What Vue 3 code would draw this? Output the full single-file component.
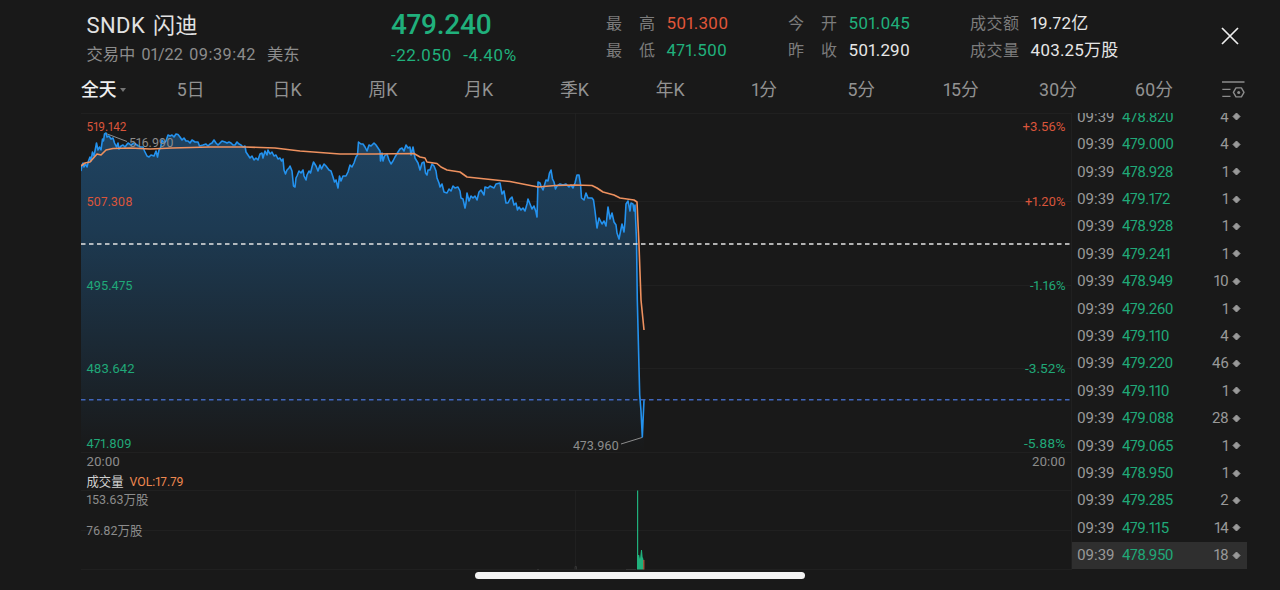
<script setup>
import { computed } from 'vue'

const stats = [
    [
        { label: '最高', value: '501.300', tone: 'up' },
        { label: '最低', value: '471.500', tone: 'down' }
    ],
    [
        { label: '今开', value: '501.045', tone: 'down' },
        { label: '昨收', value: '501.290', tone: 'flat' }
    ],
    [
        { label: '成交额', value: '19.72亿', tone: 'flat' },
        { label: '成交量', value: '403.25万股', tone: 'flat' }
    ]
]

const tabs = ['全天', '5日', '日K', '周K', '月K', '季K', '年K', '1分', '5分', '15分', '30分', '60分']

const trades = [
    ['478.820', 4],
    ['479.000', 4],
    ['478.928', 1],
    ['479.172', 1],
    ['478.928', 1],
    ['479.241', 1],
    ['478.949', 10],
    ['479.260', 1],
    ['479.110', 4],
    ['479.220', 46],
    ['479.110', 1],
    ['479.088', 28],
    ['479.065', 1],
    ['478.950', 1],
    ['479.285', 2],
    ['479.115', 14],
    ['478.950', 18]
]

// x = left edge, y = baseline, w = text width
const labels = [
    { t: '519.142', x: 86.5, y: 130.6, w: 40, c: 'up' },
    { t: '507.308', x: 86.5, y: 206, w: 46, c: 'up' },
    { t: '495.475', x: 86.5, y: 289.6, w: 46, c: 'down' },
    { t: '483.642', x: 86.5, y: 373, w: 48, c: 'down' },
    { t: '471.809', x: 86.5, y: 448, w: 45, c: 'down' },
    { t: '+3.56%', x: 1022.5, y: 130.6, w: 43, c: 'up' },
    { t: '+1.20%', x: 1025, y: 206, w: 40.5, c: 'up' },
    { t: '-1.16%', x: 1030, y: 289.6, w: 35.5, c: 'down' },
    { t: '-3.52%', x: 1025, y: 373, w: 40.5, c: 'down' },
    { t: '-5.88%', x: 1024, y: 448, w: 41.5, c: 'down' },
    { t: '20:00', x: 86.5, y: 466, w: 33.5, c: 'dim' },
    { t: '20:00', x: 1032, y: 466, w: 33.5, c: 'dim' },
    { t: '516.990', x: 129, y: 147.3, w: 44.5, c: 'dim' },
    { t: '473.960', x: 573, y: 449.8, w: 46, c: 'dim' },
    { t: '成交量', x: 86.5, y: 485.6, w: 37, c: 'bright' },
    { t: 'VOL:17.79', x: 129.5, y: 485.6, w: 54, c: 'vol' },
    { t: '153.63万股', x: 86.5, y: 503.6, w: 62, c: 'dim' },
    { t: '76.82万股', x: 86.5, y: 534.6, w: 56, c: 'dim' }
]

const gridY = [113.5, 201.5, 285.5, 368.5, 452.5, 490.5, 530.5, 569.5]

const price = `81,171 82,165 83,163 84,167 85.5,164 87,167 88.5,161 90,157 91,161 92.5,152 94,156 95,151
96.5,143 98,150 99.5,147 101,150 102.5,139 103.5,141 104.5,134 106,133 107,137 109,136 111,139 113,138
114.5,143 116.5,147 118,143 119,149 121,146 123,145 125,147 128,143 131,145 134,143 137,145 140,147
143,147 144.5,151 147,156 149,157 151,155 154,156 156,151 157.5,157 159,150 160.5,148 162,140 164,143
166,141 168,135 170,136 172,135 174,137 176,134 178,134.5 180,137 182,140 184,138 186,141 188,141
190,143 192,140 195,142 198,142 199.5,146 203,145 206,144 208,146 210,144 212,143 214,140 216,143
218,145 220,143 222,141 225,142 227,143 229,142 231,143 233,145 235,145 237,142 239,144 241,145 243,147
245,146 246,152 248,155 250,158 252,156 254,160 256,158 258,160 260,154 262,153 263,158 265,151 267,155
268,150 270,154 272,152 274,156 276,155 278,159 280,158 281.5,161 283,159 284,170 285.5,174 287,170
289,168 290,166 292,171 293.5,186 295,187 296,178 297,176 299,171 301,173 303,170 304,176 306,180
307,175 309,171 310.5,173 312,167 313.5,162 316,166 318,171 320,165 321.5,169 324,164 326,166 329,170
331,171 333,177 334.5,182 336,180 338,188 339.5,176 341,181 343,176 346,176 348,172 350,165 352,167
354,163 356,157 357.5,155 358.5,142 361,144 363,144 365,147 367,151 369,145 371,146 374,143 376,145
378,148 380,151 380.5,161 382,153 383,161 384.5,156 387,154 389,160 391,164 393,161 395,157 398,152
400,149 402,148 404,151 406,145 408,148 410,147 411,155 413,147 415,158 418,163 420,170 422,163 424,162
425.5,173 427,175 428,170 430,170 432,164 434,166 436,171 437,178 439,183 440,187 442,184 444,192
447,193 449,189 451,191 453,186 455,188 458,187 460,191 461,198 463,199 465,208 466,203 467,193 469,201
471,196 473,198 475,196 477,200 479,192 481,190 484,195 485,187 488,188 490,186 494,188 496,184 500,183
502,194 504,191 506,203 508,203 510,199 512,197 514,205 516,203 517.5,210 519,207 521,210 523,208
525,211 527,204 528,199 530,204 532,209 534,206 536,212 537,217 538,182 540,183 541,186 543,190 546,180
548,181 549.5,173 551,170 552.5,179 554,182 555.5,189 557,186 560,184 563,185 566,184 569,187 571,185
573,188 575,183 577,175 579,175 580.5,184 581.5,198 584,200 586,193 588,198 592,198 593.5,200 595,211
597,228 599,218 602,224 604,221 606,226 608,207 610,219 612,213 614,222 616,225 617,233 619,239 621,229
622,224 624,232 625,222 626,204 628,201 630,211 631,203 633,204 634,211 635,205 636.5,240 637.3,300
639.7,395 641,411 642.3,437 644,400`

const average = `81,166 85,163 90,162 97,154 101,155 106,150 113,148.5 130,148 150,149 172,148 210,147
245,147 275,148 300,151 320,152.5 340,154 357,154 375,154 414,153.5 420,157 425,158 427,162 437,163.5
441,167 447,170 460,172 467,177 500,180.5 510,181.5 538,187 555,185.5 575,185 592,185.5 597,188 603,192
614,195 620,198 634,200 637,202 639,245 641,300 644,330`

const area = computed(() => `${price} 644,452 81,452`)
</script>

<template>
  <div class="screen">
    <header class="head">
        <div class="symbol">
            <div class="name"><span>SNDK</span><span>闪迪</span></div>
            <div class="session"><span>交易中</span><span>01/22</span><span class="clock">09:39:42</span><span class="zone">美东</span></div>
        </div>
        <div class="quote down">
            <div class="last">479.240</div>
            <div class="change"><span>-22.050</span><span>-4.40%</span></div>
        </div>
        <div v-for="(group, i) in stats" :key="i" class="stat-group">
            <div v-for="s in group" :key="s.label" class="stat">
                <span class="stat-label"><i v-for="ch in s.label" :key="ch">{{ ch }}</i></span>
                <span :class="s.tone">{{ s.value }}</span>
            </div>
        </div>
        <svg class="close" viewBox="0 0 18 18" width="18" height="18">
            <path d="M1 1L17 17M17 1L1 17" />
        </svg>
    </header>

    <nav class="tabs">
        <span v-for="(tab, i) in tabs" :key="tab" class="tab" :class="{ active: i === 0 }">{{ tab }}<b v-if="i === 0" class="caret"></b></span>
        <svg class="settings" viewBox="0 0 24 18" width="24" height="18">
            <path d="M1 1H23.5M1.3 8.4H9.5M1.3 15.4H9.5" />
            <path d="M15 6.9H20.4L23 11.4L20.4 15.9H15L12.4 11.4Z" />
            <circle cx="17.7" cy="11.4" r="1.5" />
        </svg>
    </nav>

    <main class="body">
        <svg class="chart" viewBox="81 113 991 457" width="991" height="457">
            <defs>
                <linearGradient id="fill" gradientUnits="userSpaceOnUse" x1="0" y1="133" x2="0" y2="452">
                    <stop offset="0" stop-color="#1f4361" />
                    <stop offset="0.3" stop-color="#1d3a52" />
                    <stop offset="1" stop-color="#191919" />
                </linearGradient>
            </defs>
            <g class="grid">
                <path v-for="y in gridY" :key="y" :d="`M81 ${y}H1071`" />
                <path d="M575.5 113V452M575.5 490V570M1071.5 113V570" />
            </g>
            <polygon :points="area" fill="url(#fill)" />
            <path class="leader" d="M106 133.5L127 141.5M621 444L642 437.5" />
            <polyline class="price" :points="price" />
            <text v-for="(l, i) in labels" :key="i" :class="l.c" :x="l.x" :y="l.y" :textLength="l.w" lengthAdjust="spacingAndGlyphs">{{ l.t }}</text>
            <polyline class="average" :points="average" />
            <path class="prev" d="M81 244H1071" />
            <path class="now" d="M81 399.8H1071" />
            <g class="volume">
                <path d="M637 490.5H638.2V555L639.2 555L640 559L641 550H642L642.6 557L643.4 559V569.5H637Z" />
                <path class="sell" d="M643.2 560H644.4V569.5H643.2Z" />
                <path class="faint" d="M537 569.5H539M575 569.5V566.5H576.5V569.5M626 569.5H636" />
            </g>
        </svg>
        <div class="trades">
            <div v-for="(t, i) in trades" :key="i" class="trade" :class="{ latest: i === trades.length - 1 }">
                <span class="time">09:39</span>
                <span class="deal">{{ t[0] }}</span>
                <span class="size">{{ t[1] }}</span>
                <svg viewBox="0 0 9 9" width="9" height="9"><path d="M4.5 1L8 4.5L4.5 8L1 4.5Z" /></svg>
            </div>
        </div>
    </main>
    <div class="home-bar"></div>
  </div>
</template>

<style>
body {
    background: #191919;
}
</style>

<style scoped>
.screen {
    position: relative;
    width: 1280px;
    height: 590px;
    overflow: hidden;
    background: #191919;
    color: #8c8c8c;
    font-family: Roboto, 'Noto Sans CJK SC', sans-serif;
    font-variant-numeric: proportional-nums;
    box-sizing: border-box;
}

.up { color: #e0563a; fill: #d9553b; }
.down { color: #20b07c; fill: #20a878; }
.flat { color: #e6e6e6; }
.dim { fill: #8c8c8c; }
.bright { fill: #d0d0d0; }
.vol { fill: #ee8850; }

.head {
    display: grid;
    grid-template-columns: 304.5px 215px 182px 182px 251px 18px;
    height: 75px;
    padding-left: 86.5px;
}

.name {
    display: flex;
    gap: 8px;
    margin-top: 11px;
    font-size: 22px;
    line-height: 30px;
    letter-spacing: 0.4px;
    color: #e2e2e2;
}

.session {
    display: flex;
    gap: 6px;
    margin-top: 4px;
    font-size: 16.3px;
    line-height: 20px;
}

.clock {
    letter-spacing: 0.45px;
}

.zone {
    margin-left: 5px;
}

.last {
    margin-top: 8px;
    font-size: 28px;
    font-weight: 500;
    line-height: 34px;
    letter-spacing: -0.3px;
}

.change {
    display: flex;
    gap: 11.5px;
    margin-top: 2.5px;
    font-size: 17px;
    line-height: 20px;
    letter-spacing: 0.45px;
}

.stat-group {
    padding-top: 10px;
}

.stat {
    display: flex;
    gap: 11.5px;
    font-size: 17px;
    line-height: 27.3px;
    letter-spacing: 0.15px;
}

.stat-label {
    display: flex;
    justify-content: space-between;
    width: 49px;
    font-size: 16px;
    letter-spacing: 0;
    color: #7c7c7c;
}

.stat-label i {
    font-style: normal;
}

.close {
    margin-top: 27px;
    fill: none;
    stroke: #eee;
    stroke-width: 1.7;
}

.tabs {
    display: grid;
    grid-template-columns: repeat(11, 95.8px) 86.2px 24px;
    align-items: center;
    height: 30px;
    padding-left: 81px;
    margin-bottom: 8px;
    font-size: 17.8px;
    color: #929292;
}

.tab {
    display: flex;
    align-items: center;
    white-space: nowrap;
    line-height: 30px;
}

.tab.active {
    color: #eee;
    font-weight: 500;
}

.caret {
    margin-left: 3px;
    border: 3px solid transparent;
    border-top: 4px solid #747474;
    border-bottom: 0;
}

.settings {
    fill: none;
    stroke: #8c8c8c;
    stroke-width: 1.4;
    stroke-linejoin: round;
}

.settings circle {
    fill: #8c8c8c;
    stroke: none;
}

.body {
    display: flex;
    height: 457px;
    padding-left: 81px;
}

.chart {
    flex: none;
    font-size: 13px;
}

.grid path {
    stroke: #242424;
    stroke-opacity: 0.7;
}

.leader {
    fill: none;
    stroke: #8c8c8c;
}

.price,
.average {
    fill: none;
    stroke: #2492ee;
    stroke-width: 1.6;
    stroke-linejoin: round;
}

.average {
    stroke: #ee915f;
}

.prev,
.now {
    stroke: #e4e4e4;
    stroke-width: 1.5;
    stroke-dasharray: 4.5 3.5;
}

.now {
    stroke: #4166bb;
}

.volume path {
    fill: #20b07c;
}

.volume .sell {
    fill: #b8593c;
}

.volume .faint {
    fill: none;
    stroke: #333;
}

.trades {
    display: flex;
    flex-direction: column;
    justify-content: flex-end;
    width: 175px;
    height: 456px;
    overflow: hidden;
}

.trade {
    display: flex;
    flex: none;
    align-items: center;
    height: 27.42px;
    padding: 0 6.5px 0 5px;
    box-sizing: border-box;
    font-size: 15px;
    line-height: 18px;
    color: #999;
}

.trade.latest {
    background: #2f2f2f;
}

.time {
    width: 45px;
    letter-spacing: -0.1px;
}

.deal {
    color: #20a878;
    letter-spacing: -0.5px;
}

.size {
    margin-left: auto;
    margin-right: 3px;
    letter-spacing: -0.3px;
}

.trade path {
    fill: #999;
    stroke: #999;
    stroke-linejoin: round;
}

.home-bar {
    position: absolute;
    left: 475px;
    top: 572px;
    width: 330px;
    height: 7px;
    border-radius: 4px;
    background: #f2f2f2;
}
</style>
